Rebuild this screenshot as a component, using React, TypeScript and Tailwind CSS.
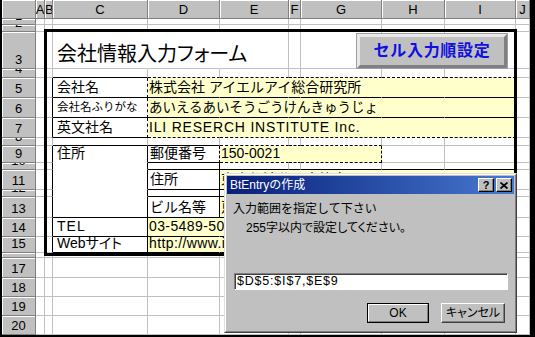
import React from 'react';

const COLS = ['A', 'B', 'C', 'D', 'E', 'F', 'G', 'H', 'I', 'J'];
const ROWS = Array.from({ length: 20 }, (_, i) => i + 1);

type Edge = 'g' | 's' | 'd' | 'y' | 'w';

const RIGHT: Record<Edge, string> = {
  g: 'border-r-[#c0c0c0]',
  s: 'border-r-black',
  d: 'border-r-black [border-right-style:dashed]',
  y: 'border-r-[#ffffcc]',
  w: 'border-r-white',
};
const BOTTOM: Record<Edge, string> = {
  g: 'border-b-[#c0c0c0]',
  s: 'border-b-black',
  d: 'border-b-black [border-bottom-style:dashed]',
  y: 'border-b-[#ffffcc]',
  w: 'border-b-white',
};

const key = (r: number, c: number) => `${r}:${c}`;
const yellow = new Set<string>();
const rightE = new Map<string, Edge>();
const bottomE = new Map<string, Edge>();

function each(r1: number, c1: number, r2: number, c2: number, fn: (r: number, c: number) => void) {
  for (let r = r1; r <= r2; r++) for (let c = c1; c <= c2; c++) fn(r, c);
}
const fill = (r1: number, c1: number, r2: number, c2: number) => each(r1, c1, r2, c2, (r, c) => yellow.add(key(r, c)));
const setR = (r1: number, r2: number, c: number, e: Edge) => each(r1, c, r2, c, (r, cc) => rightE.set(key(r, cc), e));
const setB = (r: number, c1: number, c2: number, e: Edge) => each(r, c1, r, c2, (rr, c) => bottomE.set(key(rr, c), e));

// fills (col index: A0 B1 C2 D3 E4 F5 G6 H7 I8 J9)
fill(5, 3, 7, 8);
fill(9, 4, 9, 6);
fill(11, 4, 11, 8);
fill(13, 4, 13, 8);
fill(14, 3, 15, 8);

// vertical edges
setR(5, 7, 1, 's');
setR(9, 15, 1, 's');
setR(5, 7, 2, 'd');
setR(9, 15, 2, 's');
setR(9, 9, 3, 'd');
setR(10, 13, 3, 's');
setR(9, 9, 6, 'd');
setR(5, 7, 8, 'd');
setR(11, 11, 8, 's');
setR(13, 15, 8, 's');
setR(3, 3, 2, 'w');
setR(3, 3, 3, 'w');

// horizontal edges
setB(4, 2, 2, 's');
setB(4, 3, 8, 'd');
setB(5, 2, 8, 's');
setB(6, 2, 8, 's');
setB(7, 2, 2, 's');
setB(7, 3, 8, 'd');
setB(8, 2, 3, 's');
setB(8, 4, 6, 'd');
setB(9, 3, 3, 's');
setB(9, 4, 6, 'd');
setB(9, 2, 2, 'w');
setB(10, 2, 2, 'w');
setB(11, 2, 2, 'w');
setB(12, 2, 2, 'w');
setB(10, 3, 8, 's');
setB(11, 3, 8, 's');
setB(12, 3, 8, 's');
setB(13, 2, 8, 's');
setB(14, 2, 8, 's');
setB(15, 2, 8, 's');

const TEXT: Record<string, { text: string; cls: string }> = {
  '3:2': { text: '会社情報入力フォーム', cls: "text-[20px] pl-[4px] pb-[4px] [font-feature-settings:'palt']" },
  '5:2': { text: '会社名', cls: 'text-[14px] pl-[4px] pb-[3px]' },
  '5:3': { text: '株式会社 アイエルアイ総合研究所', cls: 'text-[14px] pl-[1px] pb-[3px]' },
  '6:2': { text: '会社名ふりがな', cls: 'text-[11.5px] pl-[4px] pb-[4px]' },
  '6:3': { text: 'あいえるあいそうごうけんきゅうじょ', cls: 'text-[13.5px] pl-[1px] pb-[3px]' },
  '7:2': { text: '英文社名', cls: 'text-[14px] pl-[4px] pb-[3px]' },
  '7:3': { text: 'ILI RESERCH INSTITUTE Inc.', cls: 'text-[14px] pl-[1px] pb-[3px] tracking-[0.8px]' },
  '9:2': { text: '住所', cls: 'text-[14px] pl-[4px] pb-[2px]' },
  '9:3': { text: '郵便番号', cls: 'text-[14px] pl-[2px] pb-[2px]' },
  '9:4': { text: '150-0021', cls: 'text-[14px] pl-[1px] pb-[2px]' },
  '11:3': { text: '住所', cls: 'text-[14px] pl-[2px] pb-[3px]' },
  '11:4': { text: '東京都渋谷区恵比寿西１－３－１０', cls: 'text-[14px] pl-[1px] pb-[3px]' },
  '13:3': { text: 'ビル名等', cls: 'text-[14px] pl-[2px] pb-[3px]' },
  '13:4': { text: '恵比寿ビル５Ｆ', cls: 'text-[14px] pl-[1px] pb-[3px]' },
  '14:2': { text: 'TEL', cls: 'text-[14px] pl-[4px] pb-[3px] tracking-[1px]' },
  '14:3': { text: '03-5489-5021', cls: 'text-[14px] pl-[1px] pb-[3px] tracking-[0.4px]' },
  '15:2': { text: 'Webサイト', cls: "text-[14px] pl-[4px] pb-[2px] [font-feature-settings:'palt']" },
  '15:3': { text: 'http://www.ili.co.jp/', cls: 'text-[14px] pl-[1px] pb-[2px] tracking-[0.4px]' },
};

function Cell({ r, c }: { r: number; c: number }) {
  const k = key(r, c);
  const isY = yellow.has(k);
  const re: Edge = rightE.get(k) ?? (isY && yellow.has(key(r, c + 1)) ? 'y' : 'g');
  const be: Edge = bottomE.get(k) ?? (isY && yellow.has(key(r + 1, c)) ? 'y' : 'g');
  const t = TEXT[k];
  return (
    <div
      className={`flex min-w-0 items-end border-r border-b ${RIGHT[re]} ${BOTTOM[be]} ${isY ? 'bg-[#ffffcc]' : 'bg-white'}`}
    >
      {t && <span className={`relative z-[1] whitespace-nowrap leading-none ${t.cls}`}>{t.text}</span>}
    </div>
  );
}

function Sheet() {
  return (
    <div className="grid grid-cols-[34px_9px_8px_95px_72px_69px_12px_81px_63px_71px_14px] grid-rows-[19px_6px_7px_37px_9px_20px_20px_20px_8px_17px_7px_20px_7px_21px_19px_16px_5px_20px_19px_19px_19px]">
      <div className="border-r border-b border-r-[#808080] border-b-[#808080] bg-[#c0c0c0] shadow-[inset_1px_1px_0_#ffffff]" />
      {COLS.map((c, i) => (
        <div
          key={c}
          className={`flex items-center overflow-hidden border-r border-b border-r-[#808080] border-b-[#808080] bg-[#c0c0c0] text-[13px] leading-none shadow-[inset_1px_1px_0_#ffffff] ${i === 1 ? 'justify-start' : 'justify-center'}`}
        >
          {c}
        </div>
      ))}
      {ROWS.map((r) => (
        <React.Fragment key={r}>
          <div className="flex items-end justify-center overflow-hidden border-r border-b border-r-[#808080] border-b-[#808080] bg-[#c0c0c0] pb-[2px] text-[13px] leading-none shadow-[inset_1px_1px_0_#ffffff]">
            {r}
          </div>
          {COLS.map((_, c) => (
            <Cell key={c} r={r} c={c} />
          ))}
        </React.Fragment>
      ))}
    </div>
  );
}

function ExcelButton() {
  return (
    <div className="absolute left-[355px] top-[34px] z-20 flex h-[34px] w-[150px] items-center justify-center border-[3px] border-t-[#e8e8e8] border-l-[#e8e8e8] border-r-[#808080] border-b-[#808080] bg-[#c0c0c0] shadow-[0_0_0_1px_#a0a0a0]">
      <span className="text-[16px] font-bold leading-none tracking-[0.7px] text-[#1010e0]">セル入力順設定</span>
    </div>
  );
}

function TitleBtn({ children }: { children: React.ReactNode }) {
  return (
    <div className="flex h-[14px] w-[16px] items-center justify-center border border-t-white border-l-white border-r-black border-b-black bg-[#c0c0c0] shadow-[inset_-1px_-1px_0_#808080]">
      {children}
    </div>
  );
}

function Dialog() {
  return (
    <div className="absolute left-[222px] top-[173px] z-30 h-[160px] w-[293px] border border-t-[#dfdfdf] border-l-[#dfdfdf] border-r-[#404040] border-b-[#404040] bg-[#c0c0c0]">
      <div className="flex h-full flex-col border border-t-white border-l-white border-r-[#808080] border-b-[#808080] p-[1px]">
        <div className="flex h-[18px] items-center bg-linear-to-r from-[#0a1e7a] to-[#4a78d0] pr-[2px] pl-[3px]">
          <span className="text-[12px] leading-none text-white">BtEntryの作成</span>
          <div className="ml-auto flex gap-[2px]">
            <TitleBtn>
              <span className="text-[11px] font-bold leading-none">?</span>
            </TitleBtn>
            <TitleBtn>
              <svg width="8" height="7" viewBox="0 0 8 7">
                <path d="M0.5 0.5 L7.5 6.5 M7.5 0.5 L0.5 6.5" stroke="black" strokeWidth="1.8" />
              </svg>
            </TitleBtn>
          </div>
        </div>
        <div className="flex flex-col">
          <div className="mt-[8px] ml-[6px] text-[12px] leading-[14px]">入力範囲を指定して下さい</div>
          <div className="mt-[5px] ml-[19px] text-[12px] leading-[14px] [font-feature-settings:'palt']">255字以内で設定してください。</div>
          <div className="mt-[38px] ml-[7px] flex h-[17px] w-[274px] items-center border border-t-[#808080] border-l-[#808080] border-r-white border-b-white bg-white shadow-[inset_1px_1px_0_#404040] pl-[2px]">
            <span className="text-[12.5px] leading-none tracking-[0.8px]">$D$5:$I$7,$E$9</span>
          </div>
          <div className="mt-[13px] flex justify-end gap-[12px] pr-[9px]">
            <div className="h-[20px] w-[62px] border border-black">
              <div className="flex h-full w-full items-center justify-center border border-t-white border-l-white border-r-[#808080] border-b-[#808080] text-[12px] leading-none">
                OK
              </div>
            </div>
            <div className="flex h-[20px] w-[64px] items-center justify-center border border-t-white border-l-white border-r-[#404040] border-b-[#404040] text-[12px] leading-none shadow-[inset_-1px_-1px_0_#808080] [font-feature-settings:'palt']">
              キャンセル
            </div>
          </div>
        </div>
      </div>
    </div>
  );
}

export default function App() {
  return (
    <div className="h-[337px] w-[535px] overflow-hidden bg-black font-['Liberation_Sans','Noto_Sans_CJK_JP',sans-serif] text-black">
      <div className="relative ml-[2px] h-[335px] w-[528px] overflow-hidden bg-white">
        <Sheet />
        <div className="pointer-events-none absolute top-[29px] left-[42px] z-10 h-[227px] w-[473px] border-[3px] border-black" />
        <ExcelButton />
        <Dialog />
      </div>
    </div>
  );
}
